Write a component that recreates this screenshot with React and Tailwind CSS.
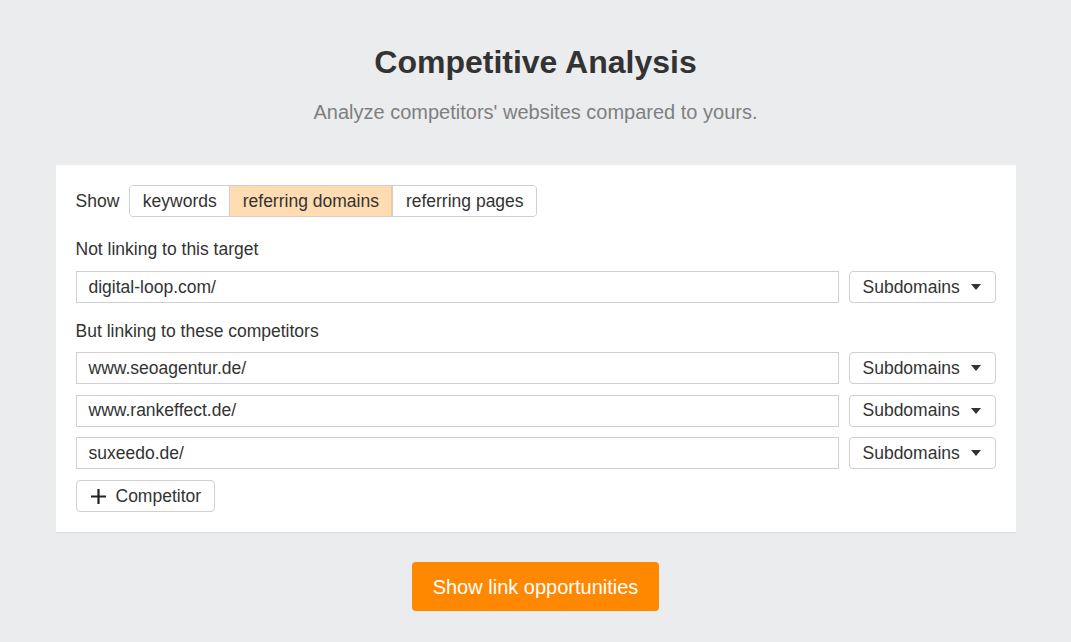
import React from "react";

const font = { fontFamily: '"Liberation Sans", Arial, sans-serif' };

const SubdomainSelect = () => (
  <button className="flex items-center justify-between h-8 w-[147px] shrink-0 pl-[13px] pr-[14px] rounded border border-[#cfcfcf] bg-white text-[17.5px] text-[#333]">
    <span>Subdomains</span>
    <svg width="10" height="6" viewBox="0 0 10 6">
      <path d="M0 0h10L5 6z" fill="#333" />
    </svg>
  </button>
);

const UrlRow = ({ value }) => (
  <div className="flex gap-[10px]">
    <div className="flex-1 h-8 flex items-center px-[12px] border border-[#cfcfcf] bg-white text-[17.5px] text-[#333]">
      {value}
    </div>
    <SubdomainSelect />
  </div>
);

const tabs = ["keywords", "referring domains", "referring pages"];

export default function App() {
  const competitors = ["www.seoagentur.de/", "www.rankeffect.de/", "suxeedo.de/"];

  return (
    <div className="min-h-[642px] w-full bg-[#ebecee] flex flex-col items-center" style={font}>
      <h1 className="mt-[42px] text-[32px] leading-[40px] font-bold text-[#333]">Competitive Analysis</h1>
      <p className="mt-[18px] text-[20px] leading-[24px] text-[#7f7f7f]">
        Analyze competitors' websites compared to yours.
      </p>

      <div className="mt-[41px] w-[960px] bg-white border-b border-[#dcdcdc] px-[20px] pt-[20px] pb-[20px]">
        <div className="flex items-center gap-[10px] text-[17.5px] text-[#333]">
          <span>Show</span>
          <div className="flex h-8 rounded border border-[#cfcfcf] overflow-hidden">
            {tabs.map((t, i) => (
              <div
                key={t}
                className={
                  "flex items-center px-[12.5px] " +
                  (i === 0 ? "" : "border-l border-[#cfcfcf] ") +
                  (i === 1 ? "bg-[#ffdcb1] border-r border-r-[#f2c99a]" : "bg-white")
                }
              >
                {t}
              </div>
            ))}
          </div>
        </div>

        <div className="mt-[22px] text-[17.5px] leading-[20px] text-[#333]">Not linking to this target</div>
        <div className="mt-[12px]">
          <UrlRow value="digital-loop.com/" />
        </div>

        <div className="mt-[18px] text-[17.5px] leading-[20px] text-[#333]">But linking to these competitors</div>
        <div className="mt-[11px] flex flex-col gap-[10.5px]">
          {competitors.map((c) => (
            <UrlRow key={c} value={c} />
          ))}
        </div>

        <button className="mt-[11px] h-8 flex items-center gap-[10px] pl-[14px] pr-[13px] rounded border border-[#cfcfcf] bg-white text-[17.5px] text-[#333]">
          <svg width="15" height="15" viewBox="0 0 15 15">
            <path d="M7.5 0v15M0 7.5h15" stroke="#222" strokeWidth="2.2" />
          </svg>
          <span>Competitor</span>
        </button>
      </div>

      <button className="mt-[29px] h-[49px] w-[247px] rounded bg-[#ff8800] text-white text-[20px]">
        Show link opportunities
      </button>
    </div>
  );
}
